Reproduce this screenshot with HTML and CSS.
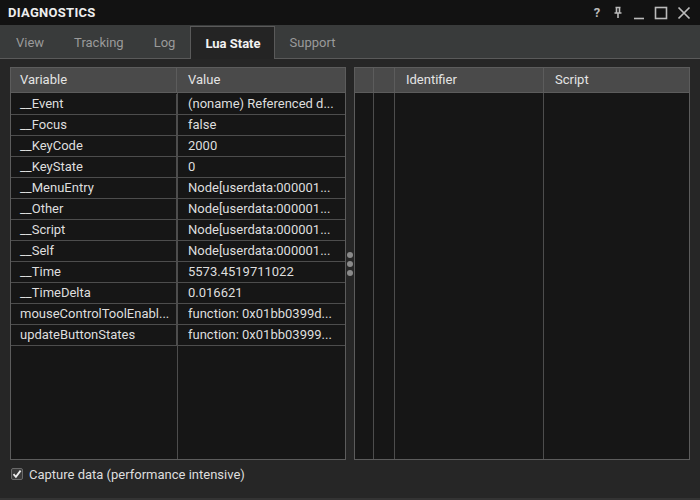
FILE: index.html
```html
<!DOCTYPE html>
<html lang="en">
<head>
  <meta charset="UTF-8">
  <title>Diagnostics</title>
  <link rel="stylesheet" href="styles.css">
</head>
<body>
  <div class="window">
    <div class="titlebar">
      <div class="title">DIAGNOSTICS</div>
      <div class="title-btns">
        <span class="tbtn help">?</span>
        <svg class="tbtn" width="12" height="14" viewBox="0 0 12 14"><path d="M3.5 1.5h5M4.5 1.5v5M7.5 1.5v5M2.5 7h7M6 7v5" stroke="#bbb" stroke-width="1.6" fill="none"/></svg>
        <svg class="tbtn" width="12" height="14" viewBox="0 0 12 14"><path d="M1 12.5h10" stroke="#bbb" stroke-width="1.6"/></svg>
        <svg class="tbtn" width="14" height="14" viewBox="0 0 14 14"><rect x="1.5" y="1.5" width="11" height="11" stroke="#bbb" stroke-width="1.6" fill="none"/></svg>
        <svg class="tbtn" width="14" height="14" viewBox="0 0 14 14"><path d="M1.5 1.5l11 11M12.5 1.5l-11 11" stroke="#bbb" stroke-width="1.7"/></svg>
      </div>
    </div>
    <div class="tabs">
      <div class="tab">View</div>
      <div class="tab">Tracking</div>
      <div class="tab">Log</div>
      <div class="tab active">Lua State</div>
      <div class="tab">Support</div>
    </div>
    <div class="content">
      <div class="pane">
        <div class="head vars-cols">
          <div class="hcell">Variable</div>
          <div class="hcell">Value</div>
        </div>
        <div class="vars">
          <div class="cell">__Event</div><div class="cell">(noname) Referenced d...</div>
          <div class="cell">__Focus</div><div class="cell">false</div>
          <div class="cell">__KeyCode</div><div class="cell">2000</div>
          <div class="cell">__KeyState</div><div class="cell">0</div>
          <div class="cell">__MenuEntry</div><div class="cell">Node[userdata:000001...</div>
          <div class="cell">__Other</div><div class="cell">Node[userdata:000001...</div>
          <div class="cell">__Script</div><div class="cell">Node[userdata:000001...</div>
          <div class="cell">__Self</div><div class="cell">Node[userdata:000001...</div>
          <div class="cell">__Time</div><div class="cell">5573.4519711022</div>
          <div class="cell">__TimeDelta</div><div class="cell">0.016621</div>
          <div class="cell">mouseControlToolEnabl...</div><div class="cell">function: 0x01bb0399d...</div>
          <div class="cell">updateButtonStates</div><div class="cell">function: 0x01bb03999...</div>
        </div>
      </div>
      <div class="splitter">
        <span class="dot"></span><span class="dot"></span><span class="dot"></span>
      </div>
      <div class="pane">
        <div class="head script-cols">
          <div class="hcell"></div>
          <div class="hcell"></div>
          <div class="hcell">Identifier</div>
          <div class="hcell">Script</div>
        </div>
        <div class="scripts script-cols">
          <div class="col"></div>
          <div class="col"></div>
          <div class="col"></div>
          <div class="col"></div>
        </div>
      </div>
    </div>
    <div class="footer">
      <label class="check">
        <span class="box">
          <svg width="10" height="10" viewBox="0 0 10 10"><path d="M1.5 5.2l2.4 2.6L8.6 1.6" stroke="#eee" stroke-width="1.8" fill="none"/></svg>
        </span>
        Capture data (performance intensive)
      </label>
    </div>
  </div>
</body>
</html>
```

FILE: styles.css
```css
body {
  margin: 0;
  background: #262626;
  font-family: Roboto, 'Noto Sans', sans-serif;
  font-size: 13px;
  color: #dcdcdc;
}
.window {
  width: 700px;
  height: 500px;
  display: flex;
  flex-direction: column;
  background: #262626;
  box-sizing: border-box;
  border-bottom: 2px solid #333;
}
.titlebar {
  height: 25px;
  background: #121212;
  display: flex;
  align-items: center;
  justify-content: space-between;
  padding: 0 8px;
  flex-shrink: 0;
}
.title {
  font-weight: bold;
  color: #eeeeee;
  letter-spacing: 0.3px;
}
.title-btns {
  display: flex;
  align-items: center;
  gap: 9px;
  margin-right: 1px;
}
.tbtn {
  display: block;
}
.help {
  color: #bbb;
  font-weight: bold;
  font-size: 13px;
  width: 12px;
  text-align: center;
}
.tabs {
  height: 33px;
  background: #393b3b;
  border-bottom: 1px solid #5a5a5a;
  display: flex;
  align-items: stretch;
  padding-left: 1px;
  flex-shrink: 0;
}
.tab {
  padding: 0 14px;
  display: flex;
  align-items: center;
  color: #9a9a9a;
  font-size: 13px;
  border: 1px solid transparent;
  border-bottom: none;
  margin-top: 1px;
}
.tab.active {
  background: #242424;
  border-color: #5a5a5a;
  color: #f2f2f2;
  font-weight: bold;
  margin-bottom: -1px;
  padding: 0 13px 0 14px;
}
.content {
  display: flex;
  padding: 8px 10px 0 10px;
}
.pane {
  width: 336px;
  height: 393px;
  box-sizing: border-box;
  border: 1px solid #5c5c5c;
  display: flex;
  flex-direction: column;
  background: #161616;
}
.head {
  height: 24px;
  background: #4a4a4a;
  border-bottom: 1px solid #5c5c5c;
  display: grid;
  flex-shrink: 0;
}
.vars-cols {
  grid-template-columns: 166px 1fr;
}
.hcell {
  display: flex;
  align-items: center;
  padding: 0 0 1px 9px;
  color: #e4e4e4;
  border-right: 1px solid #5c5c5c;
}
.vars-cols .hcell:last-child {
  padding-left: 11px;
}
.script-cols .hcell {
  padding-left: 11px;
}
.hcell:last-child {
  border-right: none;
}
.vars {
  flex: 1;
  display: grid;
  grid-template-columns: 166px 1fr;
  grid-auto-rows: 21px;
  align-content: start;
  padding-top: 1px;
  background: linear-gradient(to right, transparent 166px, #4d4d4d 166px, #4d4d4d 167px, transparent 167px), #161616;
}
.cell {
  padding: 0 4px 0 11px;
  line-height: 20px;
  border-bottom: 1px solid #4d4d4d;
  white-space: nowrap;
  overflow: hidden;
  text-overflow: ellipsis;
  color: #dedede;
}
.cell:nth-child(odd) {
  padding: 0 4px 0 9px;
  border-right: 1px solid #4d4d4d;
}
.splitter {
  width: 8px;
  display: flex;
  flex-direction: column;
  align-items: center;
  justify-content: center;
  gap: 3px;
  height: 393px;
}
.dot {
  width: 6px;
  height: 6px;
  border-radius: 50%;
  background: #8a8a8a;
}
.script-cols {
  grid-template-columns: 19px 21px 149px 1fr;
}
.scripts {
  flex: 1;
  display: grid;
}
.col {
  border-right: 1px solid #4d4d4d;
}
.col:last-child {
  border-right: none;
}
.footer {
  height: 28px;
  display: flex;
  align-items: center;
  padding-left: 11px;
}
.check {
  display: flex;
  align-items: center;
  gap: 6px;
  color: #dedede;
}
.box {
  width: 12px;
  height: 12px;
  box-sizing: border-box;
  border: 1px solid #6a6a6a;
  background: #3a3a3a;
  border-radius: 2px;
  display: flex;
  align-items: center;
  justify-content: center;
}
```
